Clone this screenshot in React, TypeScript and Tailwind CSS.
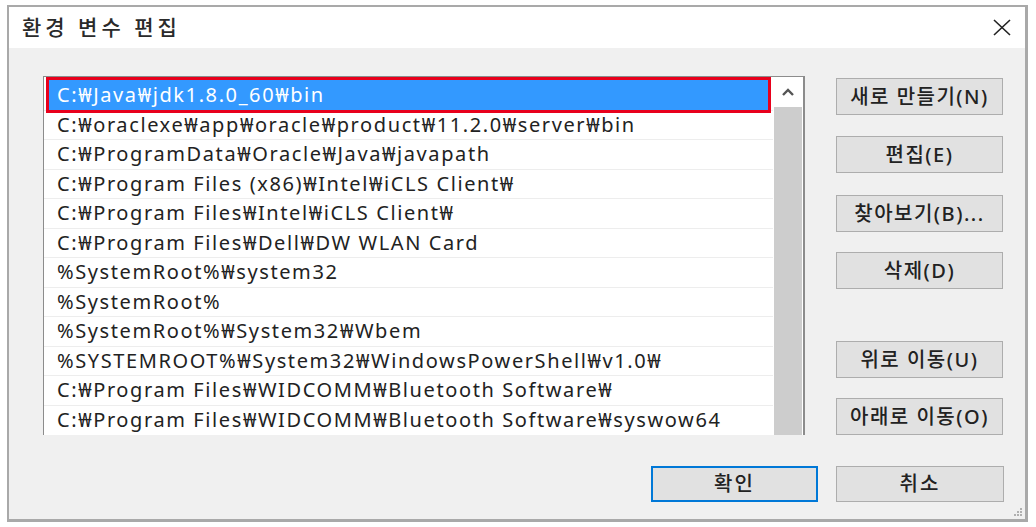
const PATHS = [
  "C:₩Java₩jdk1.8.0_60₩bin",
  "C:₩oraclexe₩app₩oracle₩product₩11.2.0₩server₩bin",
  "C:₩ProgramData₩Oracle₩Java₩javapath",
  "C:₩Program Files (x86)₩Intel₩iCLS Client₩",
  "C:₩Program Files₩Intel₩iCLS Client₩",
  "C:₩Program Files₩Dell₩DW WLAN Card",
  "%SystemRoot%₩system32",
  "%SystemRoot%",
  "%SystemRoot%₩System32₩Wbem",
  "%SYSTEMROOT%₩System32₩WindowsPowerShell₩v1.0₩",
  "C:₩Program Files₩WIDCOMM₩Bluetooth Software₩",
  "C:₩Program Files₩WIDCOMM₩Bluetooth Software₩syswow64",
];

const font = { fontFamily: '"Noto Sans", "Noto Sans CJK KR", sans-serif' };

function SideButton({ label, className = "" }: { label: string; className?: string }) {
  return (
    <button
      className={`h-[37px] w-[167px] bg-[#e1e1e1] border border-[#adadad] text-[20px] tracking-[1.5px] font-medium text-[#222] flex items-center justify-center ${className}`}
    >
      {label}
    </button>
  );
}

export default function App() {
  return (
    <div className="w-[1036px] h-[527px] bg-white pt-[5px] pl-[7px]" style={font}>
      <div className="relative w-[1021px] h-[517px] border-2 border-r-[3px] border-b-[3px] border-[#a9a9a9] bg-[#f0f0f0] flex flex-col">
        {/* title bar */}
        <div className="h-[41px] bg-white flex items-center justify-between pl-[13px] pr-[13px] shrink-0">
          <span className="text-[21px] tracking-[4px] font-medium text-[#2a2a2a]">환경 변수 편집</span>
          <svg width="20" height="17" viewBox="0 0 20 17" stroke="#222" strokeWidth="1.6">
            <path d="M2 1 L18 16 M18 1 L2 16" />
          </svg>
        </div>

        <div className="flex-1 flex flex-col pt-[28px] pl-[34px] pr-[21px]">
          <div className="flex gap-[31px]">
            {/* list */}
            <div className="w-[762px] h-[359px] bg-white border-t border-l border-r-2 border-[#8c8c8c] flex overflow-hidden">
              <div className="flex-1 pt-[3px]">
                {PATHS.map((p, i) =>
                  i === 0 ? (
                    <div
                      key={p}
                      className="h-[29.5px] mx-[5px] pl-[8px] flex items-center bg-[#3399ff] text-white text-[20px] tracking-[1.6px] outline-[3px] outline-solid outline-[#e8001c]"
                    >
                      {p}
                    </div>
                  ) : (
                    <div
                      key={p}
                      className="h-[29.5px] pl-[13px] flex items-center border-t border-[#ededed] text-[20px] tracking-[1.6px] text-[#222] whitespace-nowrap"
                    >
                      {p}
                    </div>
                  )
                )}
              </div>
              <div className="w-[30px] flex flex-col shrink-0">
                <div className="h-[30px] flex items-center justify-center">
                  <svg width="14" height="10" viewBox="0 0 14 10" fill="none" stroke="#555" strokeWidth="2.4">
                    <path d="M2 8 L7 3 L12 8" />
                  </svg>
                </div>
                <div className="flex-1 bg-[#cdcdcd] mx-[1px]" />
              </div>
            </div>

            {/* buttons */}
            <div className="flex flex-col pt-[2px]">
              <SideButton label="새로 만들기(N)" />
              <SideButton label="편집(E)" className="mt-[21px]" />
              <SideButton label="찾아보기(B)..." className="mt-[22px]" />
              <SideButton label="삭제(D)" className="mt-[20px]" />
              <SideButton label="위로 이동(U)" className="mt-[52px]" />
              <SideButton label="아래로 이동(O)" className="mt-[20px]" />
            </div>
          </div>

          <div className="flex justify-end gap-[18px] mt-[31px]">
            <button className="h-[36px] w-[167px] bg-[#e1e1e1] border-2 border-[#0078d7] text-[20px] tracking-[2px] font-medium text-[#222]">
              확인
            </button>
            <button className="h-[36px] w-[168px] bg-[#e1e1e1] border border-[#adadad] text-[20px] tracking-[2px] font-medium text-[#222]">
              취소
            </button>
          </div>
        </div>

        {/* resize grip */}
        <svg className="absolute right-[2px] bottom-[2px]" width="10" height="10" viewBox="0 0 10 10" fill="#b0b0b0">
          <rect x="7" y="1" width="2" height="2" />
          <rect x="4" y="4" width="2" height="2" />
          <rect x="7" y="4" width="2" height="2" />
          <rect x="1" y="7" width="2" height="2" />
          <rect x="4" y="7" width="2" height="2" />
          <rect x="7" y="7" width="2" height="2" />
        </svg>
      </div>
    </div>
  );
}
